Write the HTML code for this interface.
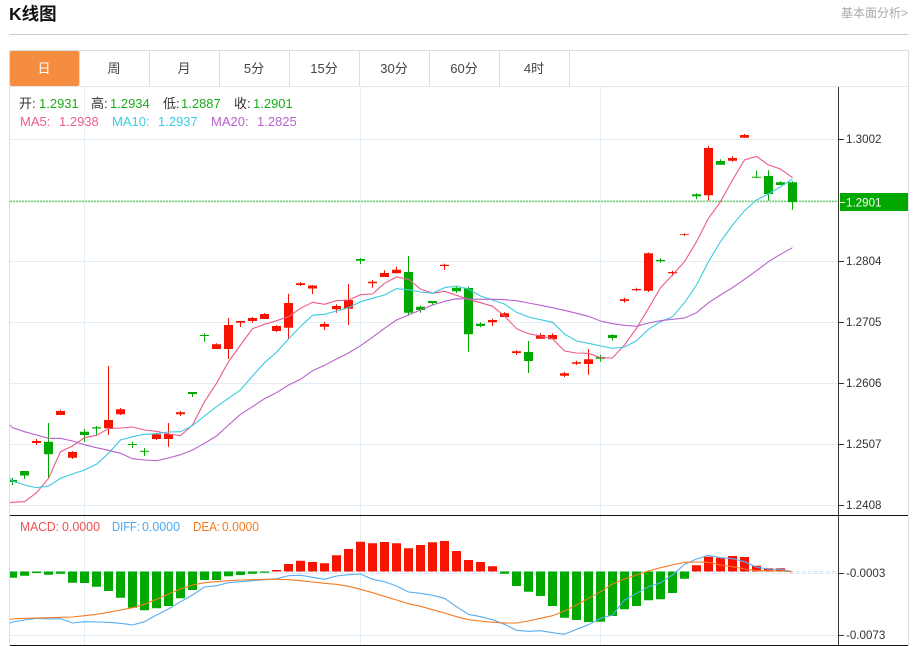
<!DOCTYPE html>
<html lang="zh">
<head>
<meta charset="utf-8">
<title>K线图</title>
<style>
html,body{margin:0;padding:0;background:#fff;width:915px;height:646px;overflow:hidden}
svg{display:block}
text{font-family:"Liberation Sans","Noto Sans CJK SC",sans-serif}
</style>
</head>
<body>
<svg width="915" height="646" viewBox="0 0 915 646" xmlns="http://www.w3.org/2000/svg">
<defs><clipPath id="c"><rect x="10" y="87" width="828" height="558"/></clipPath></defs>
<rect width="915" height="646" fill="#fff"/>
<text x="9" y="20" font-size="17.5" font-weight="700" fill="#111">K线图</text>
<text x="908" y="17" font-size="12" fill="#aaa" text-anchor="end">基本面分析&gt;</text>
<path d="M9 34.5H908.5" stroke="#ccc" fill="none"/>
<path d="M9 50.5H909M9.5 50V646M908.5 50V646M79.5 51V86M149.5 51V86M219.5 51V86M289.5 51V86M359.5 51V86M429.5 51V86M499.5 51V86M569.5 51V86" stroke="#ddd" fill="none"/>
<path d="M10 86.5H908" stroke="#e2e7ea" fill="none"/>
<rect x="10" y="51" width="69" height="35" rx="2" fill="#f58c3f"/>
<g font-size="13" fill="#444" text-anchor="middle">
<text x="44" y="73" fill="#fff">日</text>
<text x="114" y="73">周</text>
<text x="184" y="73">月</text>
<text x="254" y="73">5分</text>
<text x="324" y="73">15分</text>
<text x="394" y="73">30分</text>
<text x="464" y="73">60分</text>
<text x="534" y="73">4时</text>
</g>
<path d="M10 139.5H838M10 200.5H838M10 261.5H838M10 322.5H838M10 383.5H838M10 444.5H838M10 505.5H838M84.5 87V515M360.5 87V515M600.5 87V515M10 573.5H838M10 635.5H838M84.5 516V645M360.5 516V645M600.5 516V645" stroke="#e3edf4" fill="none"/>
<path d="M10 201.5H838" stroke="#6fd46f" stroke-width="1.5" stroke-dasharray="2 1" fill="none"/>
<path d="M10 571.7H838" stroke="#b8dcf5" stroke-dasharray="3 3" fill="none"/>
<g clip-path="url(#c)">
<path fill="#f61400" d="M32 441h9v2h-9zM56 411h9v4h-9zM68 452h9v5.7h-9zM104 420h9v8.3h-9zM116 409.3h9v5h-9zM152 434.3h9v4.7h-9zM164 434h9v5h-9zM176 412.3h9v2h-9zM212 344.3h9v4.7h-9zM224 325h9v24h-9zM236 321h9v1.7h-9zM248 318h9v3h-9zM260 314h9v5h-9zM272 326h9v5h-9zM284 303h9v24.7h-9zM296 283.3h9v1.7h-9zM308 285.5h9v3h-9zM320 324h9v2.7h-9zM332 306h9v3.3h-9zM344 300h9v8.7h-9zM368 281.7h9v1.6h-9zM380 273h9v4h-9zM392 269.7h9v3.6h-9zM440 264.7h9v1.3h-9zM488 320h9v2.3h-9zM500 313.3h9v3.7h-9zM512 351.3h9v1.7h-9zM536 335h9v3.7h-9zM548 335h9v4.3h-9zM560 373.3h9v2.4h-9zM572 362.3h9v1.4h-9zM584 359.3h9v4.7h-9zM620 299.3h9v1.7h-9zM632 289h9v1.3h-9zM644 253.3h9v37.4h-9zM668 272h9v1.3h-9zM680 234.3h9v.7h-9zM704 148h9v47.3h-9zM728 158h9v2.7h-9zM740 135h9v2.7h-9z"/>
<path stroke="#f61400" fill="none" d="M36.5 439V445M60.5 409.7V415M72.5 451V459M108.5 366V435M120.5 408V415M156.5 433V440M168.5 423V446.7M180.5 411V416M216.5 343.3V349M228.5 318V359M240.5 321V327M252.5 317V322.7M264.5 313V319M276.5 325V332M288.5 293.7V339M300.5 282V286M312.5 285V294M324.5 322V330M336.5 304.3V312.7M348.5 284V325M372.5 280V287.7M384.5 270.3V277M396.5 266.7V273.3M444.5 263.7V270M492.5 318.7V326M504.5 312.3V317M516.5 350.3V355M540.5 333.3V338.7M552.5 333.3V339.3M564.5 372V377M576.5 360.7V365M588.5 349V374.7M624.5 297.7V302.7M636.5 287.7V291.3M648.5 252.5V292M672.5 270.7V276.3M684.5 233.3V236M708.5 146V200.7M732.5 156.3V161.7M744.5 134V137.7"/>
<path fill="#00a800" d="M8 480h9v2h-9zM20 471h9v4.5h-9zM44 441.7h9v12.6h-9zM80 431.7h9v3.3h-9zM92 427.3h9v1.2h-9zM128 444h9v1h-9zM140 450.7h9v1h-9zM188 392h9v2h-9zM200 335h9v1h-9zM356 259h9v1.7h-9zM404 272h9v40.7h-9zM416 306.7h9v3.3h-9zM428 301h9v2h-9zM452 287.7h9v3.6h-9zM464 288h9v46.3h-9zM476 323.7h9v2.3h-9zM524 352h9v9h-9zM596 357h9v1.7h-9zM608 335h9v3h-9zM656 260h9v1.3h-9zM692 194.3h9v2h-9zM716 161h9v3.7h-9zM752 176.7h9v1h-9zM764 176h9v18h-9zM776 182.3h9v2.7h-9zM788 182.3h9v19.7h-9z"/>
<path stroke="#00a800" fill="none" d="M12.5 478V485M24.5 471V479M48.5 423V479M84.5 429V442M96.5 426V435M132.5 441.7V447.7M144.5 448V456M192.5 392V397M204.5 333.3V341.7M360.5 258V264M408.5 256V315.7M420.5 305.7V312.7M432.5 301V305M456.5 286.7V293M468.5 286.7V351.7M480.5 322.3V327.3M528.5 341V373M600.5 354.7V361.7M612.5 334.3V340.7M660.5 258.3V262.7M696.5 193.3V199.3M720.5 159.3V164.7M756.5 170.7V177.7M768.5 170.3V200.7M780.5 181.3V185M792.5 181.3V209.7"/>
<polyline fill="none" stroke="#ec5a8c" stroke-width="1.1" points="10,502.7 12.5,502.3 24.5,501.7 36.5,492.7 48.5,478.3 60.5,451.7 72.5,446 84.5,437.7 96.5,435.3 108.5,428.7 120.5,428 132.5,427 144.5,430 156.5,431.3 168.5,434 180.5,435.7 192.5,425 204.5,401.7 216.5,383.3 228.5,361.7 240.5,345 252.5,328.7 264.5,324.3 276.5,320.7 288.5,316.7 300.5,308.3 312.5,302.3 324.5,304.3 336.5,300.7 348.5,300 360.5,294.7 372.5,294 384.5,283.3 396.5,277 408.5,279.3 420.5,289 432.5,293.3 444.5,291.3 456.5,295.3 468.5,299.3 480.5,302.7 492.5,306.3 504.5,316 516.5,328.7 528.5,333.7 540.5,336 552.5,338.7 564.5,351 576.5,353 588.5,353.3 600.5,357.7 612.5,358 624.5,345 636.5,328.3 648.5,308.3 660.5,287.7 672.5,275 684.5,261.7 696.5,241.7 708.5,218.3 720.5,201.7 732.5,180 744.5,160 756.5,156.3 768.5,165 780.5,169 792.5,177.7"/>
<polyline fill="none" stroke="#3ccbe0" stroke-width="1.1" points="10,478.3 12.5,481 24.5,485 36.5,487.7 48.5,486 60.5,478.3 72.5,474 84.5,470 96.5,464.3 108.5,453.3 120.5,440 132.5,436.7 144.5,434.3 156.5,433.7 168.5,432 180.5,431.7 192.5,425.7 204.5,416 216.5,406.7 228.5,398.3 240.5,390 252.5,376 264.5,362.7 276.5,352.3 288.5,339 300.5,326.5 312.5,315.3 324.5,314.3 336.5,311 348.5,307.7 360.5,301.7 372.5,298.3 384.5,295 396.5,288.7 408.5,289.7 420.5,292 432.5,293.3 444.5,287.7 456.5,286 468.5,289 480.5,296 492.5,300 504.5,304 516.5,312.3 528.5,317 540.5,319.7 552.5,322.3 564.5,334 576.5,341 588.5,343.3 600.5,346 612.5,348.3 624.5,347 636.5,340.7 648.5,329.3 660.5,321.7 672.5,316.7 684.5,302.7 696.5,285 708.5,261.7 720.5,241.7 732.5,225 744.5,210.7 756.5,200 768.5,194 780.5,186.7 792.5,179"/>
<polyline fill="none" stroke="#b862cc" stroke-width="1.1" points="10,425 12.5,427.7 24.5,431.7 36.5,435 48.5,438.3 60.5,438.3 72.5,441 84.5,444.7 96.5,447.7 108.5,450.3 120.5,453.3 132.5,458.7 144.5,460 156.5,460.7 168.5,458 180.5,454.7 192.5,450 204.5,443.3 216.5,436 228.5,425 240.5,414.3 252.5,406.7 264.5,398.7 276.5,392.7 288.5,385 300.5,379.3 312.5,370.7 324.5,365.3 336.5,359 348.5,353 360.5,345.7 372.5,337.3 384.5,328.3 396.5,320 408.5,315 420.5,310 432.5,305 444.5,301.3 456.5,298.7 468.5,299 480.5,299.3 492.5,299.3 504.5,299.7 516.5,300.7 528.5,303 540.5,305.3 552.5,307.7 564.5,310.3 576.5,313.3 588.5,316.3 600.5,321 612.5,323.7 624.5,325.3 636.5,326.3 648.5,323 660.5,320.7 672.5,319.3 684.5,318 696.5,312.7 708.5,302.7 720.5,295 732.5,287.7 744.5,279.3 756.5,270.7 768.5,261.7 780.5,254.3 792.5,247.7"/>
<path fill="#00a800" d="M8 571.5h9V577.7h-9zM20 571.5h9V575.7h-9zM32 571.5h9V573h-9zM44 571.5h9V574.7h-9zM56 571.5h9V573.7h-9zM68 571.5h9V582.7h-9zM80 571.5h9V583h-9zM92 571.5h9V586.7h-9zM104 571.5h9V591h-9zM116 571.5h9V597.7h-9zM128 571.5h9V607.7h-9zM140 571.5h9V610.3h-9zM152 571.5h9V608.3h-9zM164 571.5h9V606h-9zM176 571.5h9V598.3h-9zM188 571.5h9V590h-9zM200 571.5h9V580h-9zM212 571.5h9V580h-9zM224 571.5h9V576.3h-9zM236 571.5h9V575h-9zM248 571.5h9V573.7h-9zM260 571.5h9V572.7h-9zM500 571.5h9V573.7h-9zM512 571.5h9V586h-9zM524 571.5h9V591.7h-9zM536 571.5h9V596h-9zM548 571.5h9V606h-9zM560 571.5h9V617.7h-9zM572 571.5h9V620h-9zM584 571.5h9V622h-9zM596 571.5h9V621.7h-9zM608 571.5h9V616h-9zM620 571.5h9V609.3h-9zM632 571.5h9V606h-9zM644 571.5h9V600.3h-9zM656 571.5h9V599.3h-9zM668 571.5h9V593h-9zM680 571.5h9V578.7h-9z"/>
<path fill="#f61400" d="M272 570h9V571.5h-9zM284 564h9V571.5h-9zM296 560.7h9V571.5h-9zM308 562h9V571.5h-9zM320 563.3h9V571.5h-9zM332 555.3h9V571.5h-9zM344 549h9V571.5h-9zM356 541.7h9V571.5h-9zM368 543.3h9V571.5h-9zM380 542h9V571.5h-9zM392 543.3h9V571.5h-9zM404 548.3h9V571.5h-9zM416 545h9V571.5h-9zM428 542.3h9V571.5h-9zM440 541h9V571.5h-9zM452 551h9V571.5h-9zM464 560h9V571.5h-9zM476 562h9V571.5h-9zM488 566.3h9V571.5h-9zM692 565.3h9V571.5h-9zM704 556.7h9V571.5h-9zM716 557.7h9V571.5h-9zM728 556h9V571.5h-9zM740 557h9V571.5h-9zM752 565.7h9V571.5h-9zM764 568.3h9V571.5h-9zM776 568.3h9V571.5h-9z"/>
<polyline fill="none" stroke="#58aef2" stroke-width="1.1" points="10,623.3 12.5,622 24.5,620 36.5,618.3 48.5,619 60.5,618.7 72.5,623 84.5,621.7 96.5,622 108.5,622.3 120.5,623.3 132.5,625 144.5,621.7 156.5,615 168.5,609 180.5,601.7 192.5,595 204.5,587 216.5,585.7 228.5,582.7 240.5,581.7 252.5,580.7 264.5,579.7 276.5,578.7 288.5,575.7 300.5,575.2 312.5,577.3 324.5,579.3 336.5,576 348.5,574.7 360.5,574 372.5,579.3 384.5,581.7 396.5,586 408.5,592 420.5,593.3 432.5,595.3 444.5,598.3 456.5,606.7 468.5,614.3 480.5,616.7 492.5,619.7 504.5,624.3 516.5,630.3 528.5,631.3 540.5,630.7 552.5,632.7 564.5,634.3 576.5,629.3 588.5,624.7 600.5,618.3 612.5,615 624.5,600 636.5,593.3 648.5,586.7 660.5,582.7 672.5,575 684.5,564.3 696.5,559 708.5,555.3 720.5,557.7 732.5,558.7 744.5,561.7 756.5,567.3 768.5,569 780.5,569.3 792.5,571.7"/>
<polyline fill="none" stroke="#f57a22" stroke-width="1.1" points="10,619.3 12.5,619 24.5,618.3 36.5,618 48.5,617.7 60.5,617.3 72.5,617 84.5,615.7 96.5,614.3 108.5,612.3 120.5,610 132.5,607.7 144.5,604.3 156.5,599.3 168.5,594 180.5,589 192.5,585 204.5,582.7 216.5,581.7 228.5,580.7 240.5,580 252.5,579.7 264.5,579.3 276.5,579.3 288.5,579.7 300.5,580.7 312.5,582 324.5,583.3 336.5,584.3 348.5,586.3 360.5,589.3 372.5,592.7 384.5,596.3 396.5,600 408.5,603.7 420.5,606.3 432.5,609.7 444.5,613 456.5,616.7 468.5,619.7 480.5,621 492.5,622.3 504.5,623 516.5,623 528.5,621 540.5,618.3 552.5,615.7 564.5,611 576.5,605 588.5,598.3 600.5,591.7 612.5,584 624.5,579 636.5,575 648.5,571 660.5,567.7 672.5,565 684.5,562.3 696.5,562 708.5,562.3 720.5,565 732.5,566.7 744.5,569 756.5,570.7 768.5,570.7 780.5,571 792.5,571.7"/>
</g>
<g font-size="13">
<text x="19" y="108" fill="#333">开:</text><text x="39" y="108" fill="#1aad1a">1.2931</text>
<text x="91" y="108" fill="#333">高:</text><text x="110" y="108" fill="#1aad1a">1.2934</text>
<text x="163" y="108" fill="#333">低:</text><text x="181" y="108" fill="#1aad1a">1.2887</text>
<text x="234" y="108" fill="#333">收:</text><text x="253" y="108" fill="#1aad1a">1.2901</text>
<text x="20" y="126" fill="#ee5c8e">MA5:</text><text x="59" y="126" fill="#ee5c8e">1.2938</text>
<text x="112" y="126" fill="#3ccbe0">MA10:</text><text x="158" y="126" fill="#3ccbe0">1.2937</text>
<text x="211" y="126" fill="#b862cc">MA20:</text><text x="257" y="126" fill="#b862cc">1.2825</text>
<text x="20" y="531" fill="#f05050" textLength="39" lengthAdjust="spacingAndGlyphs">MACD:</text><text x="62" y="531" fill="#f05050" textLength="38" lengthAdjust="spacingAndGlyphs">0.0000</text>
<text x="112" y="531" fill="#4da8f2" textLength="28" lengthAdjust="spacingAndGlyphs">DIFF:</text><text x="142" y="531" fill="#4da8f2" textLength="38" lengthAdjust="spacingAndGlyphs">0.0000</text>
<text x="193" y="531" fill="#f57a22" textLength="27" lengthAdjust="spacingAndGlyphs">DEA:</text><text x="222" y="531" fill="#f57a22" textLength="37" lengthAdjust="spacingAndGlyphs">0.0000</text>
</g>
<path d="M838.5 87V646" stroke="#333" fill="none"/>
<path d="M10 515.5H908M10 645.5H908" stroke="#111" fill="none"/>
<path d="M839 139.5H844M839 261.5H844M839 322.5H844M839 383.5H844M839 444.5H844M839 505.5H844M839 573.5H844M839 635.5H844" stroke="#333" fill="none"/>
<rect x="840" y="193" width="68" height="18" fill="#00a800"/>
<path d="M840 202.5H845" stroke="#fff" fill="none"/>
<g font-size="11.6" fill="#333">
<text x="846" y="143">1.3002</text>
<text x="846" y="206.5" fill="#fff">1.2901</text>
<text x="846" y="265">1.2804</text>
<text x="846" y="326">1.2705</text>
<text x="846" y="387">1.2606</text>
<text x="846" y="448">1.2507</text>
<text x="846" y="509">1.2408</text>
<text x="846" y="577">-0.0003</text>
<text x="846" y="639">-0.0073</text>
</g>
</svg>
</body>
</html>
